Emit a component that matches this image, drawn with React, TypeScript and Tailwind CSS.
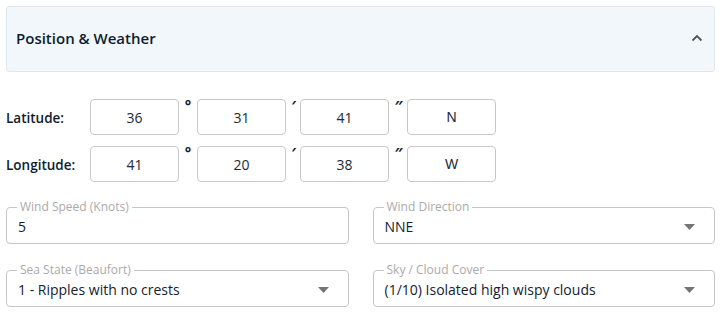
const coords = [
  { label: 'Latitude:', deg: '36', min: '31', sec: '41', hemi: 'N' },
  { label: 'Longitude:', deg: '41', min: '20', sec: '38', hemi: 'W' },
];

const CoordBox = ({ value, arial }: { value: string; arial?: boolean }) => (
  <div
    className={`w-[89px] h-[36px] flex items-center justify-center border border-[#c9c9c9] rounded-[4px] text-[14px] text-[#1b2a3a] ${
      arial ? "font-['Liberation_Sans',sans-serif]" : ''
    }`}
  >
    {value}
  </div>
);

const Symbol = ({ children, italic, narrow }: { children: string; italic?: boolean; narrow?: boolean }) => (
  <div
    className={`${narrow ? 'w-[14px]' : 'w-[18px]'} h-[36px] flex justify-center font-bold text-[#0f1c2b] text-[15px] leading-[12px] ${
      italic ? 'italic' : ''
    }`}
  >
    {children}
  </div>
);

const Field = ({ label, value, select }: { label: string; value: string; select?: boolean }) => (
  <fieldset className="border border-[#c6c6c6] rounded-[4px] pl-[10px] pr-[16px] h-[45px] flex items-center min-w-0">
    <legend className="px-[3px] text-[12px] leading-[16px] text-[#aaaaaa]">{label}</legend>
    <div className="flex items-center justify-between w-full -mt-[5px]">
      <span className="pl-[1px] text-[14px] text-[#14222f]">{value}</span>
      {select && (
        <svg width="11" height="6" viewBox="0 0 11 6" className="mr-[3px]">
          <path d="M0 0 L11 0 L5.5 6 Z" fill="#757575" />
        </svg>
      )}
    </div>
  </fieldset>
);

export default function App() {
  return (
    <div className="w-[724px] h-[316px] bg-white p-[6px] pr-[9px] font-['Open_Sans',sans-serif]">
      <div className="h-[66px] flex items-center justify-between bg-[#f1f7fb] border border-[#e2e7eb] rounded-[3px] pl-[9px] pr-[11px]">
        <span className="text-[15px] font-semibold text-[#0d1d30] -mt-[1px]">Position &amp; Weather</span>
        <svg width="12" height="8" viewBox="0 0 12 8" className="-mt-[2px]">
          <path d="M1.5 6.5 L6 2 L10.5 6.5" fill="none" stroke="#555" strokeWidth="1.8" />
        </svg>
      </div>

      <div className="mt-[27px] flex flex-col gap-[11px]">
        {coords.map((c) => (
          <div key={c.label} className="flex items-center">
            <div className="w-[84px] text-[13.5px] font-semibold text-[#0f1c2b] pt-[2px]">{c.label}</div>
            <CoordBox value={c.deg} />
            <Symbol>°</Symbol>
            <CoordBox value={c.min} />
            <Symbol italic narrow>′</Symbol>
            <CoordBox value={c.sec} />
            <Symbol italic>″</Symbol>
            <CoordBox value={c.hemi} arial />
          </div>
        ))}
      </div>

      <div className="mt-[17px] grid grid-cols-2 gap-x-[24px] gap-y-[18px]">
        <Field label="Wind Speed (Knots)" value="5" />
        <Field label="Wind Direction" value="NNE" select />
        <Field label="Sea State (Beaufort)" value="1 - Ripples with no crests" select />
        <Field label="Sky / Cloud Cover" value="(1/10) Isolated high wispy clouds" select />
      </div>
    </div>
  );
}
